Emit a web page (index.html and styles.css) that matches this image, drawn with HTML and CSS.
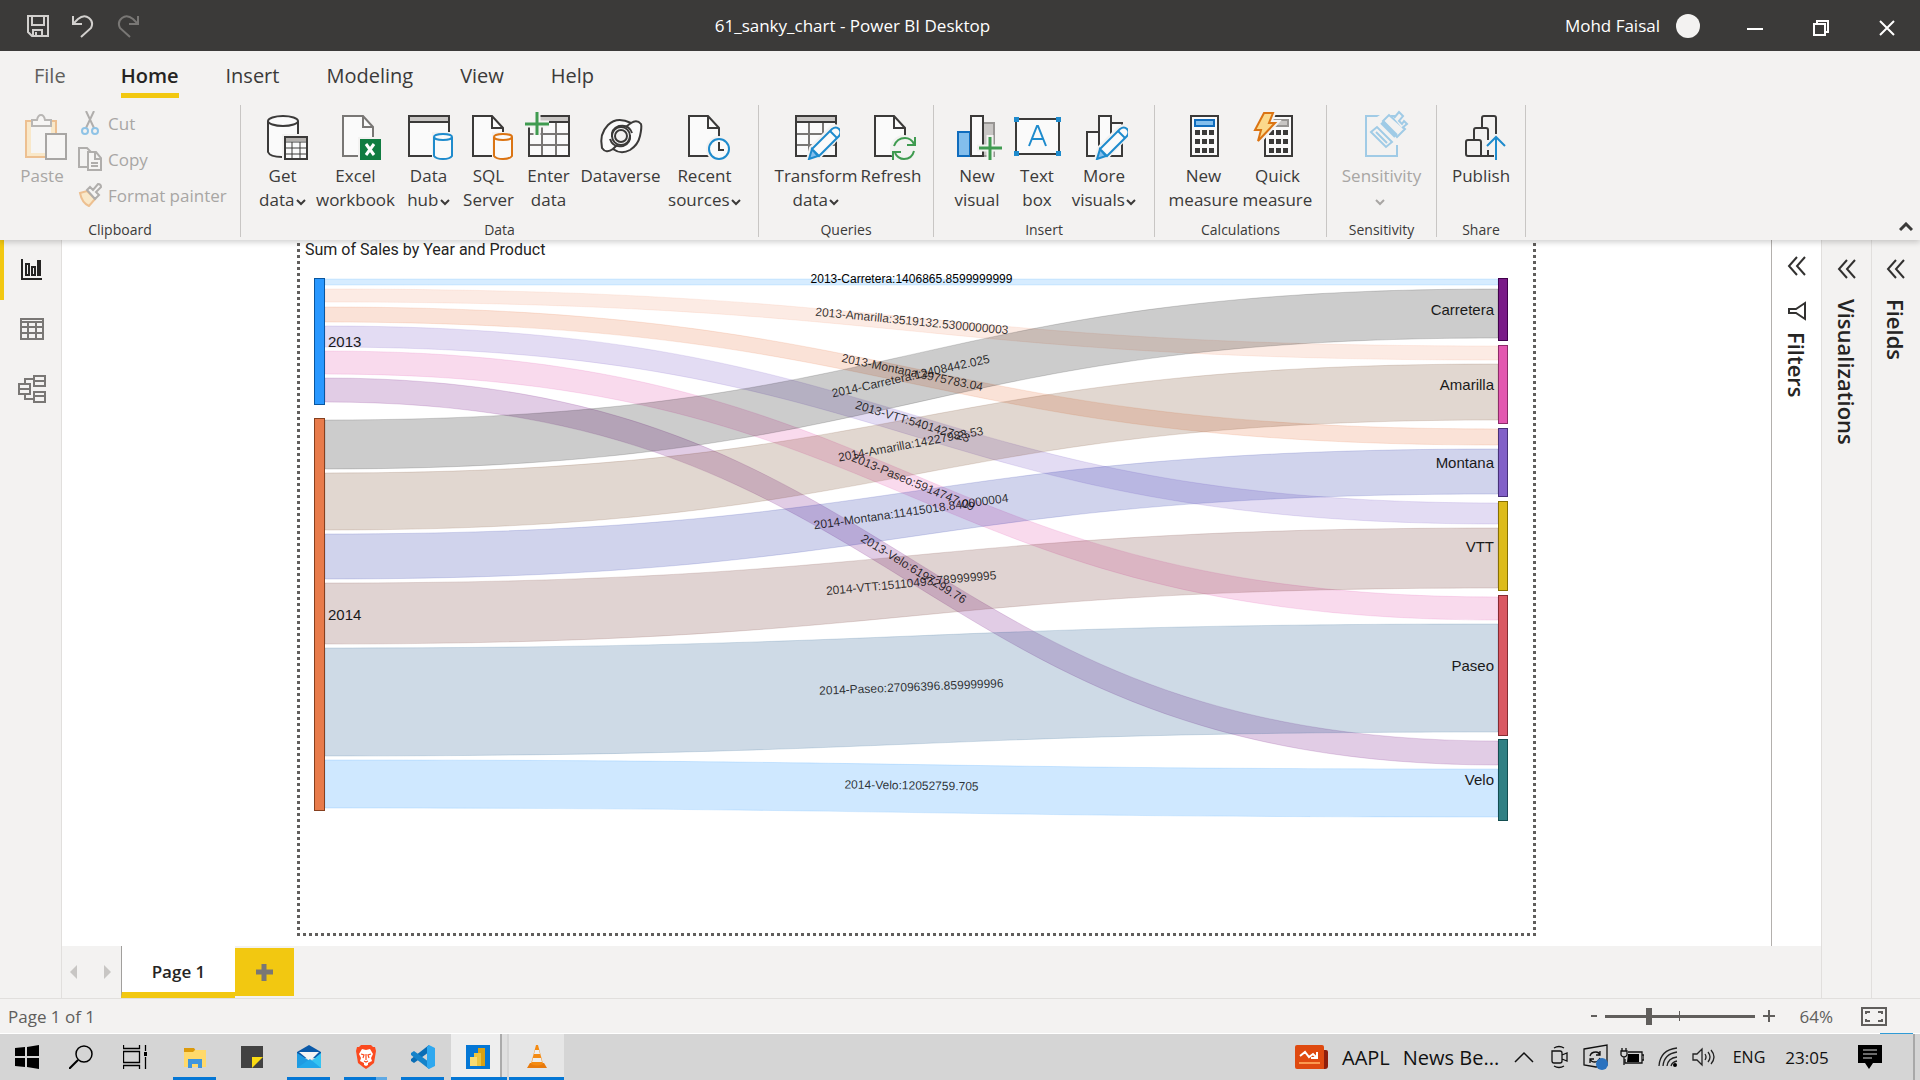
FILE: index.html
```html
<!DOCTYPE html>
<html lang="en">
<head>
<meta charset="utf-8">
<title>61_sanky_chart - Power BI Desktop</title>
<link rel="stylesheet" href="styles.css">
</head>
<body>
<svg class="defs" width="0" height="0" aria-hidden="true">
  <symbol id="chev" viewBox="0 0 10 8"><path d="M1 2l4 4 4-4" fill="none" stroke="currentColor" stroke-width="2"/></symbol>
  <symbol id="dbl" viewBox="0 0 20 20"><path d="M10 1L2 10l8 9M18 1l-8 9 8 9" fill="none" stroke="#323130" stroke-width="2"/></symbol>
  <symbol id="doc" viewBox="0 0 48 48"><path d="M8 4h19l11 12v28H8z" fill="#fafafa" stroke="#3b3a39" stroke-width="2"/><path d="M27 4v12h11" fill="none" stroke="#3b3a39" stroke-width="2"/></symbol>
  <symbol id="grid" viewBox="0 0 48 48"><path d="M4 4h40v40H4z" fill="#fafafa"/><path d="M4 4h40v6H4z" fill="#c8c6c4"/><path d="M4 22h40M4 33h40M17 10v34M31 10v34" stroke="#797775" stroke-width="2" fill="none"/><path d="M4 4h40v40H4zM4 10h40" fill="none" stroke="#3b3a39" stroke-width="2"/></symbol>
  <symbol id="pencil" viewBox="0 0 48 48"><path d="M16 48l3-12L40 15q4-2 7 1 3 3 1 7L28 44z" fill="#f3f2f1" stroke="#f3f2f1" stroke-width="4"/><path d="M17 47l3-10 6 7z" fill="#83beec" stroke="#1e8bcd" stroke-width="2"/><path d="M20 37l20-20q4-3 7 0t0 7L27 44z" fill="#fafafa" stroke="#1e8bcd" stroke-width="2"/><path d="M38 19l7 7" stroke="#1e8bcd" stroke-width="2"/></symbol>
  <symbol id="calc" viewBox="0 0 48 48"><path d="M11 4h27v40H11z" fill="#fafafa" stroke="#3b3a39" stroke-width="2"/><path d="M15 18h5v5h-5zM22 18h5v5h-5zM29 18h5v5h-5zM15 27h5v5h-5zM22 27h5v5h-5zM29 27h5v5h-5zM15 36h5v5h-5zM22 36h5v5h-5zM29 36h5v5h-5z" fill="#3b3a39"/></symbol>
</svg>

<header class="titlebar">
  <div class="quick">
    <button aria-label="Save"><svg width="24" height="24" viewBox="0 0 24 24"><path d="M2 2h20v20H6l-4-4zM6 2v9h12V2M7 22v-6h9v6M10 18v4" fill="none" stroke="#d2d0ce" stroke-width="2"/></svg></button>
    <button aria-label="Undo"><svg width="24" height="24" viewBox="0 0 24 24"><path d="M2 2v8h9M2 10l5-5q6-5 11-1t2 10L10 23" fill="none" stroke="#d2d0ce" stroke-width="2"/></svg></button>
    <button aria-label="Redo" disabled><svg width="24" height="24" viewBox="0 0 24 24"><path d="M22 2v8h-9M22 10l-5-5q-6-5-11-1t-2 10l10 9" fill="none" stroke="#797775" stroke-width="2"/></svg></button>
  </div>
  <h1>61_sanky_chart - Power BI Desktop</h1>
  <div class="account"><span>Mohd Faisal</span><i class="avatar"></i></div>
  <div class="winctl">
    <button aria-label="Minimize"><svg width="16" height="16" viewBox="0 0 16 16"><path d="M0 9h16" stroke="#fff" stroke-width="2"/></svg></button>
    <button aria-label="Restore"><svg width="16" height="16" viewBox="0 0 16 16"><path d="M1 4h11v11H1zM4 4V1h11v11h-3" fill="none" stroke="#fff" stroke-width="2"/></svg></button>
    <button aria-label="Close"><svg width="16" height="16" viewBox="0 0 16 16"><path d="M1 1l14 14M15 1L1 15" stroke="#fff" stroke-width="2"/></svg></button>
  </div>
</header>

<nav class="tabs">
  <a href="#" class="file">File</a><a href="#" class="on">Home</a><a href="#">Insert</a><a href="#">Modeling</a><a href="#">View</a><a href="#">Help</a>
</nav>

<section class="ribbon">
  <div class="group clipboard">
    <div class="cmds">
      <button class="cmd paste" disabled><svg class="ico" viewBox="0 0 48 48"><path d="M8 9h30v36H8z" fill="#f9e8c9" stroke="#edc091" stroke-width="2"/><path d="M13 15h20v26H13z" fill="#f6f5f4"/><path d="M14 14V8h5q1-5 4-5t4 5h6v6z" fill="#f6f5f4" stroke="#b8b6b4" stroke-width="2"/><path d="M28 22h20v25H28z" fill="#f6f5f4" stroke="#a8a6a4" stroke-width="2"/></svg><span>Paste</span></button>
      <div class="stack">
        <button disabled><svg width="24" height="24" viewBox="0 0 24 24"><path d="M8 0l8 17M16 0L8 17" stroke="#b0aeac" stroke-width="2" fill="none"/><circle cx="7" cy="20" r="3" fill="none" stroke="#8fc3e6" stroke-width="2"/><circle cx="17" cy="20" r="3" fill="none" stroke="#8fc3e6" stroke-width="2"/></svg>Cut</button>
        <button disabled><svg width="24" height="24" viewBox="0 0 24 24"><path d="M9 20H1V1h8l4 4" fill="none" stroke="#b0aeac" stroke-width="2"/><path d="M10 5h8l5 6v12H10zM17 5v7h6M13 16h7M13 19h7" fill="#f6f5f4" stroke="#b0aeac" stroke-width="2"/></svg>Copy</button>
        <button disabled><svg width="24" height="24" viewBox="0 0 24 24"><path d="M2 10l7-2 8 8-6 7Q4 20 2 10z" fill="#f9e8c9" stroke="#edc091" stroke-width="2"/><path d="M9 7l3-3 3 3 5-6q3 0 3 3l-5 5 3 3-4 4z" fill="#f6f5f4" stroke="#b0aeac" stroke-width="2"/></svg>Format painter</button>
      </div>
    </div>
    <p>Clipboard</p>
  </div>

  <div class="group data">
    <div class="cmds">
      <button class="cmd w62"><svg class="ico" viewBox="0 0 48 48"><path d="M9 9v31q2 5 16 5h15V9" fill="#fafafa"/><path d="M39 22V9M9 9v31q2 5 14 5" fill="none" stroke="#3b3a39" stroke-width="2"/><ellipse cx="24" cy="9" rx="15" ry="5" fill="#fafafa" stroke="#3b3a39" stroke-width="2"/><path d="M23 22h27v27H23z" fill="#f3f2f1"/><path d="M26 25h22v22H26z" fill="#fafafa" stroke="#3b3a39" stroke-width="2"/><path d="M27 26h20v3H27z" fill="#b3b0ad"/><path d="M26 30h22M26 36h22M26 42h22M33 30v17M41 30v17" stroke="#3b3a39" stroke-width="1"/></svg><span>Get<br>data <svg class="chev"><use href="#chev"/></svg></span></button>
      <button class="cmd w84"><svg class="ico" viewBox="0 0 48 48"><path d="M11 4h20l10 11v29H11z" fill="#fafafa" stroke="#797775" stroke-width="2"/><path d="M31 4v11h10" fill="none" stroke="#797775" stroke-width="2"/><path d="M26 25h24v24H26z" fill="#f3f2f1"/><path d="M28 27h21v21H28z" fill="#107c41"/><path d="M34 32l8 11M42 32l-8 11" stroke="#fff" stroke-width="3"/></svg><span>Excel<br>workbook</span></button>
      <button class="cmd w62"><svg class="ico" viewBox="0 0 48 48"><path d="M4 4h40v40H4z" fill="#fafafa"/><path d="M4 4h40v6H4z" fill="#c8c6c4"/><path d="M4 4h40v40H4zM4 10h40" fill="none" stroke="#3b3a39" stroke-width="2"/><path d="M27 20h22v29H27z" fill="#f3f2f1"/><path d="M29 25v19q2 3 9 3t9-3V25" fill="#fafafa" stroke="#1e8bcd" stroke-width="2"/><ellipse cx="38" cy="25" rx="9" ry="3" fill="#fafafa" stroke="#1e8bcd" stroke-width="2"/></svg><span>Data<br>hub <svg class="chev"><use href="#chev"/></svg></span></button>
      <button class="cmd w58"><svg class="ico" viewBox="0 0 48 48"><use href="#doc" width="48" height="48"/><path d="M27 20h22v29H27z" fill="#f3f2f1"/><path d="M29 25v19q2 3 9 3t9-3V25" fill="#fafafa" stroke="#db7413" stroke-width="2"/><ellipse cx="38" cy="25" rx="9" ry="3" fill="#fafafa" stroke="#db7413" stroke-width="2"/></svg><span>SQL<br>Server</span></button>
      <button class="cmd w62"><svg class="ico" viewBox="0 0 48 48"><use href="#grid" width="48" height="48"/><path d="M1 1h14v14H1z" fill="#f3f2f1"/><path d="M12 0v23M0 12h24" stroke="#f3f2f1" stroke-width="7"/><path d="M12 0v23M0 12h24" stroke="#3f9b50" stroke-width="3"/></svg><span>Enter<br>data</span></button>
      <button class="cmd w82"><svg class="ico" viewBox="0 0 48 48"><g fill="#fafafa" stroke="#3b3a39" stroke-width="2"><path d="M34 11Q20 4 11 13T5 36q4 6 11 1 8 6 17 1 8-5 10-14t1-12q-4-5-10-1z"/><path d="M34 11q-3 2-5 4M16 37q2-2 4-4" fill="none"/><circle cx="24" cy="24" r="9"/><circle cx="24" cy="24" r="6" fill="#f3f2f1"/><path d="M15 25q-1-8 7-11 10-2 13 7M33 23q1 8-7 11-10 2-13-7" fill="none"/></g></svg><span>Dataverse</span></button>
      <button class="cmd w86"><svg class="ico" viewBox="0 0 48 48"><use href="#doc" width="48" height="48"/><circle cx="38" cy="37" r="13" fill="#f3f2f1"/><circle cx="38" cy="37" r="10" fill="#fafafa" stroke="#1e8bcd" stroke-width="2"/><path d="M38 30v8h5" fill="none" stroke="#3b3a39" stroke-width="2"/></svg><span>Recent<br>sources <svg class="chev"><use href="#chev"/></svg></span></button>
    </div>
    <p>Data</p>
  </div>

  <div class="group queries">
    <div class="cmds">
      <button class="cmd w90"><svg class="ico" viewBox="0 0 48 48"><use href="#grid" width="48" height="48"/><use href="#pencil" width="48" height="48"/></svg><span>Transform<br>data <svg class="chev"><use href="#chev"/></svg></span></button>
      <button class="cmd w60"><svg class="ico" viewBox="0 0 48 48"><use href="#doc" width="48" height="48"/><circle cx="37" cy="37" r="14" fill="#f3f2f1"/><path d="M27 34q3-8 11-8 6 0 9 6M48 25v8h-8M47 39q-2 8-10 8-6 0-9-6M26 48v-8h8" fill="none" stroke="#3f9b50" stroke-width="2"/></svg><span>Refresh</span></button>
    </div>
    <p>Queries</p>
  </div>

  <div class="group insert">
    <div class="cmds">
      <button class="cmd w64"><svg class="ico" viewBox="0 0 48 48"><path d="M5 20h12v24H5z" fill="#83beec" stroke="#0f6cbd" stroke-width="2"/><path d="M30 11h11v33H30z" fill="#c8c6c4" stroke="#979593" stroke-width="2"/><path d="M18 4h12v40H18z" fill="#fafafa" stroke="#3b3a39" stroke-width="2"/><path d="M37 23v26M24 36h26" stroke="#f3f2f1" stroke-width="7"/><path d="M37 25v23M26 36h23" stroke="#3f9b50" stroke-width="3"/></svg><span>New<br>visual</span></button>
      <button class="cmd w56"><svg class="ico" viewBox="0 0 48 48"><path d="M3 7h43v35H3z" fill="#fafafa" stroke="#3b3a39" stroke-width="2"/><path d="M1 5h5v5H1zM43 5h5v5h-5zM1 39h5v5H1zM43 39h5v5h-5z" fill="#1e8bcd"/><path d="M16 34l8-20h1l8 20M19 27h11" fill="none" stroke="#1e8bcd" stroke-width="2"/></svg><span>Text<br>box</span></button>
      <button class="cmd w78"><svg class="ico" viewBox="0 0 48 48"><path d="M7 20h12v24H7zM31 11h11v33H31zM19 4h12v40H19z" fill="#fafafa" stroke="#3b3a39" stroke-width="2"/><use href="#pencil" width="48" height="48"/></svg><span>More<br>visuals <svg class="chev"><use href="#chev"/></svg></span></button>
    </div>
    <p>Insert</p>
  </div>

  <div class="group calcs">
    <div class="cmds">
      <button class="cmd w74"><svg class="ico" viewBox="0 0 48 48"><use href="#calc" width="48" height="48"/><path d="M15 8h19v6H15z" fill="#83beec" stroke="#0f6cbd" stroke-width="2"/></svg><span>New<br>measure</span></button>
      <button class="cmd w74"><svg class="ico" viewBox="0 0 48 48"><use href="#calc" width="48" height="48"/><path d="M15 8h19v6H15z" fill="#c8c6c4" stroke="#979593" stroke-width="2"/><path d="M10 1h9l-4 10h6L4 30l3-12H1z" fill="#f3f2f1" stroke="#f3f2f1" stroke-width="6"/><path d="M10 1h9l-4 10h6L4 29l3-11H1z" fill="#fbd98b" stroke="#db7413" stroke-width="2"/></svg><span>Quick<br>measure</span></button>
    </div>
    <p>Calculations</p>
  </div>

  <div class="group sens">
    <div class="cmds">
      <button class="cmd w90" disabled><svg class="ico" viewBox="0 0 48 48"><g fill="#f3f2f1" stroke="#a0cbe6" stroke-width="2"><path d="M8 4h31v40H8z"/><path d="M19 5l9-6 20 20-6 14H28z" stroke="none"/><path d="M13 20l6-5 15 15-6 5zM18 20l11 11"/><path d="M25 9l6-6 16 14-8 8z"/><path d="M36 6l5-6 4 4-4 5 3 3 2-3 3 3-5 4"/></g><path d="M24 10l14 14" stroke="#a0cbe6" stroke-width="5"/></svg><span>Sensitivity<br><svg class="chev"><use href="#chev"/></svg></span></button>
    </div>
    <p>Sensitivity</p>
  </div>

  <div class="group share">
    <div class="cmds">
      <button class="cmd w74"><svg class="ico" viewBox="0 0 48 48"><g fill="none" stroke="#3b3a39" stroke-width="2"><path d="M25 16V6q0-2 2-2h10q2 0 2 2v16M17 28V18q0-2 2-2h10q2 0 2 2v10M31 38v6M9 30q0-2 2-2h11q2 0 2 2v14H11q-2 0-2-2zM24 44h13"/></g><path d="M39 48V25M30 34l9-9 9 9" fill="none" stroke="#1e8bcd" stroke-width="2"/></svg><span>Publish</span></button>
    </div>
    <p>Share</p>
  </div>
  <button class="collapse" aria-label="Collapse ribbon"><svg width="14" height="10" viewBox="0 0 14 10"><path d="M1 8l6-6 6 6" fill="none" stroke="#3b3a39" stroke-width="3"/></svg></button>
</section>

<main>
  <nav class="views">
    <button class="on" aria-label="Report"><svg width="28" height="28" viewBox="0 0 28 28"><path d="M5 3v20h20" fill="none" stroke="#252423" stroke-width="2"/><path d="M9 8h3v11H9zM15 11h3v8h-3zM21 5h2v14h-2z" fill="none" stroke="#252423" stroke-width="2"/></svg></button>
    <button aria-label="Data"><svg width="28" height="28" viewBox="0 0 28 28"><path d="M3 4h22v20H3zM3 7h22M3 12h22M3 18h22M10 7v17M18 7v17" fill="none" stroke="#797775" stroke-width="2"/></svg></button>
    <button aria-label="Model"><svg width="28" height="28" viewBox="0 0 28 28"><path d="M1 9h11v10H1zM1 14h11M16 1h11v10H16zM16 6h11M16 17h11v10H16zM16 21h11M7 9V4h9M7 19v5h9" fill="none" stroke="#797775" stroke-width="2"/></svg></button>
  </nav>

  <div class="center">
    <div class="work">
      <div class="canvas">
        <article class="page">
          <h2>Sum of Sales by Year and Product</h2>
          <svg class="sankey" viewBox="300 270 1233 560" role="img" aria-label="Sankey chart of sales by year and product">
            <g class="links">
              <path fill="#31a0ff" stroke="#31a0ff" d="M325 279C912 279 912 279 1498 279V285C912 285 912 285 325 285z"/>
              <path fill="#f09b78" stroke="#f09b78" d="M325 289C912 289 912 346 1498 346V360C912 360 912 302 325 302z"/>
              <path fill="#e66c37" stroke="#e66c37" d="M325 307C912 307 912 429 1498 429V445C912 445 912 322 325 322z"/>
              <path fill="#744ec2" stroke="#744ec2" d="M325 326C912 326 912 503 1498 503V524C912 524 912 347 325 347z"/>
              <path fill="#e044a7" stroke="#e044a7" d="M325 351C912 351 912 597 1498 597V620C912 620 912 374 325 374z"/>
              <path fill="#6b007b" stroke="#6b007b" d="M325 378C912 378 912 741 1498 741V765C912 765 912 402 325 402z"/>
              <path fill="#000000" stroke="#000000" d="M325 420C912 420 912 289 1498 289V338C912 338 912 469 325 469z"/>
              <path fill="#6b3714" stroke="#6b3714" d="M325 473C912 473 912 364 1498 364V420C912 420 912 530 325 530z"/>
              <path fill="#12239e" stroke="#12239e" d="M325 534C912 534 912 449 1498 449V494C912 494 912 579 325 579z"/>
              <path fill="#64221e" stroke="#64221e" d="M325 583C912 583 912 528 1498 528V588C912 588 912 644 325 644z"/>
              <path fill="#094780" stroke="#094780" d="M325 648C912 648 912 624 1498 624V732C912 732 912 756 325 756z"/>
              <path fill="#118dff" stroke="#118dff" d="M325 760C912 760 912 769 1498 769V817C912 817 912 808 325 808z"/>
            </g>
            <defs>
              <path id="l1" d="M325 283H1498"/>
              <path id="l2" d="M325 296C912 296 912 354 1498 354"/>
              <path id="l3" d="M325 315C912 315 912 438 1498 438"/>
              <path id="l4" d="M325 337C912 337 912 514 1498 514"/>
              <path id="l5" d="M325 363C912 363 912 609 1498 609"/>
              <path id="l6" d="M325 391C912 391 912 754 1498 754"/>
              <path id="l7" d="M325 446C912 446 912 314 1498 314"/>
              <path id="l8" d="M325 503C912 503 912 393 1498 393"/>
              <path id="l9" d="M325 558C912 558 912 473 1498 473"/>
              <path id="l10" d="M325 615C912 615 912 559 1498 559"/>
              <path id="l11" d="M325 703C912 703 912 679 1498 679"/>
              <path id="l12" d="M325 785C912 785 912 794 1498 794"/>
            </defs>
            <g class="linklabels">
              <text class="strong"><textPath href="#l1" startOffset="50%">2013-Carretera:1406865.8599999999</textPath></text>
              <text><textPath href="#l2" startOffset="50%">2013-Amarilla:3519132.5300000003</textPath></text>
              <text><textPath href="#l3" startOffset="50%">2013-Montana:3975783.04</textPath></text>
              <text><textPath href="#l4" startOffset="50%">2013-VTT:5401427.23</textPath></text>
              <text><textPath href="#l5" startOffset="50%">2013-Paseo:5914747.09</textPath></text>
              <text><textPath href="#l6" startOffset="50%">2013-Velo:6197299.76</textPath></text>
              <text><textPath href="#l7" startOffset="50%">2014-Carretera:12408442.025</textPath></text>
              <text><textPath href="#l8" startOffset="50%">2014-Amarilla:14227983.53</textPath></text>
              <text><textPath href="#l9" startOffset="50%">2014-Montana:11415018.840000004</textPath></text>
              <text><textPath href="#l10" startOffset="50%">2014-VTT:15110493.789999995</textPath></text>
              <text><textPath href="#l11" startOffset="50%">2014-Paseo:27096396.859999996</textPath></text>
              <text><textPath href="#l12" startOffset="50%">2014-Velo:12052759.705</textPath></text>
            </g>
            <g class="nodes" shape-rendering="crispEdges">
              <path fill="#2998ff" stroke="#09569f" d="M314.500 278.500h10v126h-10z"/>
              <path fill="#e87b4b" stroke="#86401f" d="M314.500 418.500h10v392h-10z"/>
              <path fill="#7a1a88" stroke="#41004b" d="M1498.500 278.500h9v62h-9z"/>
              <path fill="#e357b0" stroke="#8d2b69" d="M1498.500 345.500h9v78h-9z"/>
              <path fill="#8260c8" stroke="#483078" d="M1498.500 428.500h9v68h-9z"/>
              <path fill="#ddbb1a" stroke="#877000" d="M1498.500 501.500h9v89h-9z"/>
              <path fill="#da5862" stroke="#862b32" d="M1498.500 595.500h9v140h-9z"/>
              <path fill="#308084" stroke="#134d50" d="M1498.500 739.500h9v81h-9z"/>
            </g>
            <g class="names">
              <text x="328" y="347">2013</text>
              <text x="328" y="620">2014</text>
              <g text-anchor="end">
                <text x="1494" y="315">Carretera</text>
                <text x="1494" y="390">Amarilla</text>
                <text x="1494" y="468">Montana</text>
                <text x="1494" y="552">VTT</text>
                <text x="1494" y="671">Paseo</text>
                <text x="1494" y="785">Velo</text>
              </g>
            </g>
          </svg>
        </article>
      </div>
      <aside class="pane filters">
        <button aria-label="Expand filters"><svg width="20" height="20"><use href="#dbl"/></svg></button>
        <svg class="funnel" width="20" height="20" viewBox="0 0 20 20"><path d="M18 2v16l-9-6H2V8h7z" fill="none" stroke="#323130" stroke-width="2"/></svg>
        <h3>Filters</h3>
      </aside>
    </div>
    <div class="sheets">
      <button class="arrow" disabled aria-label="Previous page"><svg width="8" height="14" viewBox="0 0 8 14"><path d="M7 0v14L0 7z" fill="#c8c6c4"/></svg></button>
      <button class="arrow" disabled aria-label="Next page"><svg width="8" height="14" viewBox="0 0 8 14"><path d="M1 0v14l7-7z" fill="#c8c6c4"/></svg></button>
      <button class="sheet">Page 1</button>
      <button class="add" aria-label="New page"><svg width="17" height="17" viewBox="0 0 17 17"><path d="M8 0v17M0 8h17" stroke="#797775" stroke-width="5"/></svg></button>
    </div>
  </div>

  <aside class="pane grey">
    <button aria-label="Expand visualizations"><svg width="20" height="20"><use href="#dbl"/></svg></button>
    <h3>Visualizations</h3>
  </aside>
  <aside class="pane grey last">
    <button aria-label="Expand fields"><svg width="20" height="20"><use href="#dbl"/></svg></button>
    <h3>Fields</h3>
  </aside>
</main>

<footer class="status">
  <span>Page 1 of 1</span>
  <div class="zoom">
    <button aria-label="Zoom out"><svg width="12" height="12" viewBox="0 0 12 12"><path d="M3 6h6" stroke="#605e5c" stroke-width="2"/></svg></button>
    <input type="range" min="0" max="100" value="29" aria-label="Zoom">
    <button aria-label="Zoom in"><svg width="12" height="12" viewBox="0 0 12 12"><path d="M0 6h12M6 0v12" stroke="#605e5c" stroke-width="2"/></svg></button>
    <span>64%</span>
    <button class="fit" aria-label="Fit to page"><svg width="26" height="20" viewBox="0 0 26 20"><path d="M1 2h24v17H1z" fill="none" stroke="#605e5c" stroke-width="2"/><path d="M5 8V6h4M17 6h4v2M5 13v2h4M17 15h4v-2" fill="none" stroke="#605e5c" stroke-width="2"/></svg></button>
  </div>
</footer>

<footer class="taskbar">
  <div class="pins">
    <button aria-label="Start"><svg width="24" height="24" viewBox="0 0 24 24"><path d="M0 3l10-1v9H0zM12 2l12-2v11H12zM0 13h10v9L0 21zM12 13h12v11l-12-2z"/></svg></button>
    <button aria-label="Search"><svg width="24" height="24" viewBox="0 0 24 24"><circle cx="15" cy="9" r="8" fill="none" stroke="#000" stroke-width="1.500"/><path d="M9 15l-9 9" stroke="#000" stroke-width="2"/></svg></button>
    <button aria-label="Task view"><svg width="24" height="24" viewBox="0 0 24 24"><path d="M.5 0v3.500h16V0M.5 24v-3.500h16V24M.5 6.500h16v11H.5zM22.500 0v6M22.500 12v12" fill="none" stroke="#000" stroke-width="1.300"/><path d="M21 7h4v4h-4z"/></svg></button>
    <button class="open" aria-label="File Explorer"><svg width="24" height="24" viewBox="0 0 24 24"><path d="M1 3h10l2 3v4H1z" fill="#dc9a0b"/><path d="M1 7h9l2-2h11v17H1z" fill="#ffd96a"/><path d="M5 14h14v9h-4v-4H9v4H5z" fill="#3f95dd"/></svg></button>
    <button aria-label="Sticky Notes"><svg width="24" height="24" viewBox="0 0 24 24"><path d="M1 1h22v22H1z" fill="#424242"/><path d="M12 12h11L12 23z" fill="#fbdb12"/></svg></button>
    <button class="open" aria-label="Mail"><svg width="24" height="24" viewBox="0 0 24 24"><path d="M0 7l12-7 12 7v6H0z" fill="#0a59a8"/><path d="M2 7h20l-9 9z" fill="#f4f4f4"/><path d="M0 8l24 15H0z" fill="#1e9be2"/><path d="M24 8v15H6z" fill="#35c4f3"/><path d="M0 23h24L13 14z" fill="#21a7ea"/></svg></button>
    <button class="open more" aria-label="Brave"><svg width="24" height="24" viewBox="0 0 24 24"><path d="M7 0h10l2 2h2l1 4-2 12-5 4-3 2-3-2-5-4L2 6l1-4h2z" fill="#fb4a1f"/><path d="M12 5l4-1 3 5-2 4 1 3-4 2v2l-2 1-2-1v-2l-4-2 1-3-2-4 3-5z" fill="#fff"/><path d="M7 9l3 1-1 3M17 9l-3 1 1 3M12 9v6M10 16l2 1 2-1" fill="none" stroke="#fb4a1f" stroke-width="1.200"/></svg></button>
    <button class="open" aria-label="Visual Studio Code"><svg width="24" height="24" viewBox="0 0 24 24"><path d="M18 0v7L3 18l-3-2v-2z" fill="#0a6db5"/><path d="M0 8l3-2 15 11v7L0 10z" fill="#1583ca"/><path d="M18 0l6 3v18l-6 3-2-2V2z" fill="#2fa8ef"/></svg></button>
    <button class="open active" aria-label="Power BI"><svg width="24" height="24" viewBox="0 0 24 24"><path d="M0 0h24v24H0z" fill="#0577d5"/><path d="M12 3h7v18h-7z" fill="#d9a113"/><path d="M8 8h7v13H8z" fill="#ecc53f"/><path d="M4 12h7v9H4z" fill="#f8dc72"/></svg></button>
    <button class="open lit" aria-label="VLC"><svg width="24" height="24" viewBox="0 0 24 24"><path d="M5 18h14l3 5H2z" fill="#e87a0c"/><path d="M11 0h2l5 19q-6 3-12 0z" fill="#f48b13"/><path d="M10 5h4l1 4H9zM8 13h8l1 4H7z" fill="#eee"/></svg></button>
  </div>
  <div class="tray">
    <button class="news"><svg width="34" height="24" viewBox="0 0 34 24"><path d="M26 5h5q2 0 2 2v14q0 3-3 3H8z" fill="#8f1e0c"/><path d="M2 0h25q2 0 2 2v22H2q-2 0-2-2V2q0-2 2-2z" fill="#df4a10"/><path d="M5 11l5-4 4 5 4-3 4 4M22 7v6h-6" fill="none" stroke="#fff" stroke-width="2"/><path d="M4 18h21" stroke="#fc9a50" stroke-width="2"/></svg><span>AAPL</span><span>News Be...</span></button>
    <button aria-label="Show hidden icons"><svg width="20" height="12" viewBox="0 0 20 12"><path d="M1 11l9-9 9 9" fill="none" stroke="#111" stroke-width="1.500"/></svg></button>
    <button aria-label="Meet now"><svg width="20" height="24" viewBox="0 0 20 24"><path d="M2 6h8q2 0 2 2v8q0 2-2 2H4q-2 0-2-2zM12 10l5-2v8l-5-2M4 3q5-3 10 0M4 21q5 3 10 0" fill="none" stroke="#111" stroke-width="1.300"/></svg></button>
    <button aria-label="Update"><svg width="26" height="26" viewBox="0 0 26 26"><path d="M1 5l23-4v20l-11 2-12-2z" fill="none" stroke="#111" stroke-width="1.300"/><path d="M7 12q1-4 6-4 3 0 4 3M17 7v4h-4M17 14q-2 4-5 4-4 0-5-3M7 19v-4h4" fill="none" stroke="#111" stroke-width="1.300"/><circle cx="19" cy="20" r="6" fill="#2a72bf"/></svg></button>
    <button aria-label="Battery"><svg width="24" height="20" viewBox="0 0 24 20"><path d="M8 5h14v11H5v-4M22 8h2v5h-2" fill="none" stroke="#111" stroke-width="1.300"/><path d="M8 7h11v8H7z"/><path d="M1 4h6v4q-1 2-3 2T1 8zM2 4V1M6 4V1M4 10v8" fill="none" stroke="#111" stroke-width="1.300"/></svg></button>
    <button aria-label="Network"><svg width="20" height="20" viewBox="0 0 20 20"><path d="M1 19Q2 3 19 1M5 19Q6 7 19 5M9 19q1-8 10-9M13 19q1-4 6-5" fill="none" stroke="#222" stroke-width="1.300"/><circle cx="17" cy="18" r="2"/></svg></button>
    <button aria-label="Volume"><svg width="24" height="20" viewBox="0 0 24 20"><path d="M1 7h4l5-5v16l-5-5H1zM13 7q2 3 0 6M16 5q4 5 0 10M19 3q6 7 0 14" fill="none" stroke="#222" stroke-width="1.300"/></svg></button>
    <button class="lang">ENG</button>
    <button class="clock">23:05</button>
    <button class="note" aria-label="Notifications"><svg width="24" height="24" viewBox="0 0 24 24"><path d="M0 0h24v18h-9l-4 6-4-6H0z"/><path d="M5 5h14M5 9h14M5 13h9" stroke="#d5d5d5" stroke-width="1"/></svg></button>
    <button class="desk" aria-label="Show desktop"></button>
  </div>
</footer>
</body>
</html>
```
FILE: styles.css
```css
* { box-sizing: border-box; }
body {
  margin: 0;
  min-height: 100vh;
  display: flex;
  flex-direction: column;
  background: #f3f2f1;
  color: #3b3a39;
  font-family: "Open Sans", "Noto Sans", sans-serif;
  font-size: 17px;
}
h1, h2, h3, p { margin: 0; font-weight: 400; }
button {
  margin: 0;
  padding: 0;
  border: 0;
  background: none;
  font: inherit;
  color: inherit;
  display: flex;
  align-items: center;
  justify-content: center;
}
a { color: inherit; text-decoration: none; }
.defs { position: absolute; }

/* Title bar */
.titlebar { height: 51px; flex: none; display: flex; align-items: center; background: #3b3a39; color: #fff; }
.quick { display: flex; gap: 21px; padding-left: 26px; }
.titlebar h1 { flex: 1; font-size: 17px; text-align: center; }
.account { display: flex; align-items: center; gap: 16px; margin-right: 22px; }
.avatar { width: 24px; height: 24px; border-radius: 50%; background: #f3f2f1; }
.winctl { display: flex; }
.winctl button { width: 66px; height: 51px; padding-top: 4px; }

/* Ribbon */
.tabs { height: 54px; flex: none; display: flex; align-items: flex-start; gap: 47px; padding: 8px 34px 0; font-size: 20px; line-height: 33px; }
.tabs .file { margin-right: 8px; color: #605e5c; }
.tabs .on { font-weight: 600; color: #252423; padding-bottom: 1px; border-bottom: 5px solid #f2c811; }
.ribbon { flex: none; height: 135px; display: flex; position: relative; z-index: 1; box-shadow: 0 2px 6px rgba(0, 0, 0, .2); clip-path: inset(0 0 -10px 0); background: #f3f2f1; }
.group { height: 132px; display: flex; flex-direction: column; justify-content: space-between; border-right: 1px solid #c8c6c4; }
.group p { font-size: 14px; line-height: 16px; text-align: center; margin-bottom: -1px; }
.cmds { display: flex; align-items: flex-start; justify-content: center; }
.clipboard { width: 241px; }
.clipboard .cmds { justify-content: flex-start; padding-left: 15px; }
.data { width: 518px; }
.queries { width: 175px; }
.insert { width: 221px; }
.calcs { width: 172px; }
.sens { width: 110px; }
.share { width: 89px; }
.cmd { flex-direction: column; padding-top: 7px; line-height: 24px; white-space: nowrap; }
.cmd span { margin-top: 4px; }
.cmd:disabled, .stack button:disabled { color: #a8a6a4; }
.ico { width: 48px; height: 48px; overflow: visible; }
.chev { width: 10px; height: 8px; margin-left: -3px; }
.paste { width: 54px; }
.w56 { width: 56px; }
.w58 { width: 58px; }
.w60 { width: 60px; }
.w62 { width: 62px; }
.w64 { width: 64px; }
.w74 { width: 74px; }
.w78 { width: 78px; }
.w82 { width: 82px; }
.w84 { width: 84px; }
.w86 { width: 86px; }
.w90 { width: 90px; }
.stack { margin-left: 9px; }
.stack button { height: 36px; gap: 6px; }
.collapse { margin: auto 7px 8px auto; }

/* Workspace */
main { flex: 1; display: flex; min-height: 400px; }
.views { width: 62px; border-right: 1px solid #e1dfdd; }
.views button { width: 62px; height: 60px; padding: 0 0 2px 2px; }
.views .on { border-left: 4px solid #f2c811; padding: 0 4px 0 0; }
.center { flex: 1; min-width: 0; display: flex; flex-direction: column; }
.work { flex: 1; display: flex; background: #fff; }
.canvas { flex: 1; min-width: 0; display: flex; justify-content: center; padding-bottom: 10px; }
.page {
  width: 100%;
  max-width: 1239px;
  padding: 0 3px;
  background:
    repeating-linear-gradient(#fff 0 3px, #605e5c 3px 6px) left top / 3px 100% no-repeat,
    repeating-linear-gradient(#fff 0 3px, #605e5c 3px 6px) right top / 3px 100% no-repeat,
    repeating-linear-gradient(90deg, #605e5c 0 3px, #fff 3px 6px) left bottom / 100% 3px no-repeat;
}
.page h2 { padding-left: 5px; font: 16px/20px Roboto, sans-serif; height: 30px; color: #252423; }
.sankey { display: block; width: 100%; }
.links { fill-opacity: .2; stroke-opacity: .15; }
.linklabels { font: 12px "Liberation Sans", sans-serif; fill: #000; text-anchor: middle; fill-opacity: .8; }
.linklabels .strong { fill-opacity: 1; }
.names { font: 15px "Liberation Sans", sans-serif; fill: #1a1a1a; }
.pane { width: 50px; border-left: 1px solid #e1dfdd; display: flex; flex-direction: column; align-items: center; color: #252423; }
.filters { background: #fff; border-left-color: #b3b0ad; padding-top: 16px; }
.grey { padding-top: 19px; }
.last { width: 49px; }
.pane h3 { writing-mode: vertical-rl; font-size: 22px; font-weight: 600; line-height: 28px; margin-top: 20px; }
.filters .funnel { margin-top: 25px; }
.filters h3 { margin-top: 11px; }

/* Page tabs */
.sheets { height: 52px; display: flex; }
.arrow { width: 24px; }
.arrow:first-child { width: 35px; padding-right: 11px; }
.arrow:nth-child(2) { padding-right: 5px; }
.sheet { width: 114px; border-left: 1px solid #a19f9d; border-bottom: 6px solid #f2c811; background: #fff; color: #252423; font-weight: 600; padding-top: 5px; }
.add { width: 59px; height: 48px; margin-top: 2px; background: #f2c811; }

/* Status bar */
.status { height: 36px; flex: none; display: flex; align-items: center; justify-content: space-between; border-top: 1px solid #e1dfdd; border-bottom: 1px solid #fff; padding: 0 33px 0 8px; color: #605e5c; }
.zoom { display: flex; align-items: center; }
.zoom input {
  appearance: none;
  width: 150px;
  height: 17px;
  margin: 0 8px 0 5px;
  background:
    linear-gradient(#605e5c, #605e5c) center / 150px 3px no-repeat,
    linear-gradient(#605e5c, #605e5c) 74px center / 1px 10px no-repeat;
}
.zoom input::-webkit-slider-thumb { appearance: none; width: 6px; height: 17px; background: #605e5c; }
.zoom span { margin: 0 28px 0 25px; }

/* Taskbar */
.taskbar { height: 46px; flex: none; display: flex; justify-content: space-between; background: #d5d5d5; color: #111; position: relative; }
.pins, .tray { display: flex; }
.pins button { width: 54px; padding-top: 2px; border-bottom: 3px solid transparent; }
.pins button:nth-child(n+4) { width: 43px; margin-left: 14px; }
.pins button:nth-child(4) { margin-left: 11px; }
.pins .open { border-bottom-color: #0577d5; }
.pins .more { border-image: linear-gradient(90deg, #0577d5 72%, #5fa9e4 72%) 3; }
.pins button.active { width: 56px; margin-left: 7px; padding-right: 2px; background: linear-gradient(90deg, #eee 49px, #ababab 49px 51px, #e0e0e0 51px); }
.pins button.lit { width: 55px; margin-left: 2px; background: #e6e6e6; }
.tray button { width: 36px; }
.tray .news { width: 216px; justify-content: flex-start; gap: 13px; padding-left: 5px; font-size: 20px; white-space: nowrap; }
.tray .lang { width: 54px; font-size: 16px; }
.tray .clock { width: 62px; }
.tray .note { width: 64px; margin-right: 11px; }
.tray .desk { width: 7px; border-left: 2px solid #a8a8a8; }
.taskbar::after { content: ""; position: absolute; right: 7px; top: -1px; width: 33px; height: 1px; background: #2f9bd6; }
```
